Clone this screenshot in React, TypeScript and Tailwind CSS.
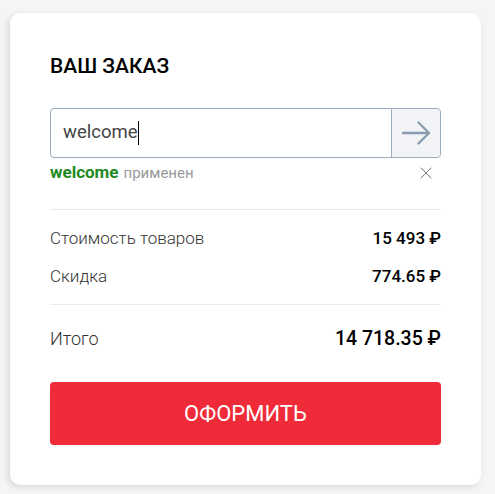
import { X } from "lucide-react";

function Row({ label, value, big }: { label: string; value: string; big?: boolean }) {
  return (
    <div className="flex items-baseline justify-between">
      <span className={`font-light text-[#333] ${big ? "text-[18px]" : "text-[17px]"}`}>{label}</span>
      <span className={`font-medium text-black ${big ? "text-[19.5px]" : "text-[17px]"}`}>{value}</span>
    </div>
  );
}

export default function App() {
  return (
    <div className="min-h-screen bg-[#f5f5f5] pt-[13px] pl-[10px] font-['Roboto',sans-serif]">
      <div className="w-[471px] rounded-[10px] bg-white px-10 pt-[40px] pb-[40px] shadow-[-2px_2px_6px_rgba(0,0,0,0.12)]">
        <h2 className="text-[21px] leading-[26px] font-medium text-black">ВАШ ЗАКАЗ</h2>

        {/* Promo code */}
        <div className="mt-[29px] flex h-[50px] rounded-[4px] border border-[#9aabc0]">
          <div className="flex flex-1 items-center pl-3 text-[18.5px] text-[#444]">
            welcome<span className="ml-px h-[24px] w-px bg-black" />
          </div>
          <button className="flex w-[49px] items-center justify-center rounded-r-[4px] border-l border-[#9aabc0] bg-[#f2f3f7]">
            <svg width="30" height="24" viewBox="0 0 30 24" fill="none" stroke="#8b9cb0" strokeWidth="2.4" strokeLinecap="round" strokeLinejoin="round">
              <path d="M2 12h26M17.5 1.5 28 12 17.5 22.5" />
            </svg>
          </button>
        </div>
        <div className="mt-[4px] flex items-center justify-between leading-5">
          <div className="flex items-baseline gap-[5px]">
            <span className="text-[17px] font-bold text-[#1e8a1e]">welcome</span>
            <span className="text-[15px] text-[#999]">применен</span>
          </div>
          <X className="mr-[5px] h-[20px] w-[20px] text-[#777]" strokeWidth={1.2} />
        </div>

        <div className="mt-[26px] border-t border-[#eaeaea]" />

        <div className="flex flex-col gap-[16px] pt-[17px] pb-[17px] leading-[22px]">
          <Row label="Стоимость товаров" value="15 493 ₽" />
          <Row label="Скидка" value="774.65 ₽" />
        </div>

        <div className="border-t border-[#eaeaea]" />

        <div className="pt-[22px] pb-[31px] leading-6">
          <Row label="Итого" value="14 718.35 ₽" big />
        </div>

        <button className="flex h-[63px] w-full items-center justify-center rounded-[4px] bg-[#ef2a39] text-[22px] text-white">
          ОФОРМИТЬ
        </button>
      </div>
    </div>
  );
}
